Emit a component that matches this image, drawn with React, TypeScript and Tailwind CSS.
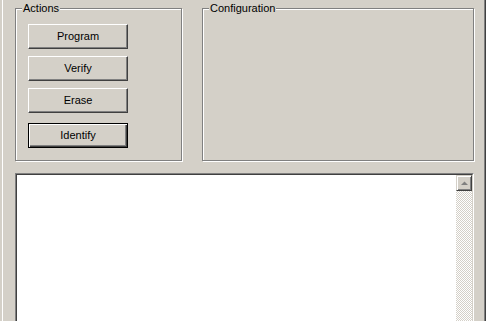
const actions = ['Program', 'Verify', 'Erase', 'Identify']

function GroupBox({ title, className, children }: { title: string; className?: string; children?: React.ReactNode }) {
  return (
    <div
      className={`relative border border-[#808080] shadow-[inset_1px_1px_0_#fff,1px_1px_0_#fff] ${className ?? ''}`}
    >
      <span className="absolute left-[6px] top-[-7px] bg-[#d4d0c8] px-[1px] leading-[13px]">{title}</span>
      {children}
    </div>
  )
}

export default function App() {
  return (
    <div className="flex h-[321px] w-[488px] overflow-hidden bg-[#d4d0c8] font-['Liberation_Sans',Arial,sans-serif] text-[11px] text-black">
      <div className="w-[2px]" />
      <div className="w-px bg-white" />
      <div className="flex flex-1 flex-col pl-[12px] pr-[10px] pt-[8px]">
        <div className="flex h-[153px] shrink-0 gap-[20px]">
          <GroupBox title="Actions" className="w-[167px]">
            <div className="flex flex-col gap-[7px] pl-[12px] pt-[15px]">
              {actions.map((a) => {
                const def = a === 'Identify'
                return (
                  <button
                    key={a}
                    className={`h-[25px] w-[100px] border bg-[#d4d0c8] leading-none ${
                      def
                        ? 'mt-[3px] border-black shadow-[inset_1px_1px_0_#fff,inset_-1px_-1px_0_#404040,inset_-2px_-2px_0_#808080]'
                        : 'border-b-[#404040] border-l-white border-r-[#404040] border-t-white shadow-[inset_-1px_-1px_0_#808080]'
                    }`}
                  >
                    {a}
                  </button>
                )
              })}
            </div>
          </GroupBox>
          <GroupBox title="Configuration" className="flex-1" />
        </div>

        {/* log output */}
        <div className="mt-[12px] flex h-[180px] shrink-0 border border-b-white border-l-[#808080] border-r-white border-t-[#808080]">
          <div className="flex flex-1 border border-b-[#d4d0c8] border-l-[#404040] border-r-[#d4d0c8] border-t-[#404040]">
            <div className="flex-1 bg-white" />
            <div className="flex w-[16px] flex-col">
              <div className="flex h-[16px] items-center justify-center border border-b-[#404040] border-l-[#d4d0c8] border-r-[#404040] border-t-[#d4d0c8] bg-[#d4d0c8] shadow-[inset_1px_1px_0_#fff,inset_-1px_-1px_0_#808080]">
                <svg width="7" height="5" viewBox="0 0 7 5">
                  <path d="M3.5 0.5 L7 4 L0 4 Z" fill="#808080" />
                </svg>
              </div>
              <div className="flex-1 bg-[image:repeating-conic-gradient(#d4d0c8_0_25%,#fff_0_50%)] bg-[length:2px_2px]" />
            </div>
          </div>
        </div>
      </div>
      <div className="w-px bg-[#808080]" />
      <div className="w-px bg-[#404040]" />
      <div className="w-[2px] bg-white" />
    </div>
  )
}
